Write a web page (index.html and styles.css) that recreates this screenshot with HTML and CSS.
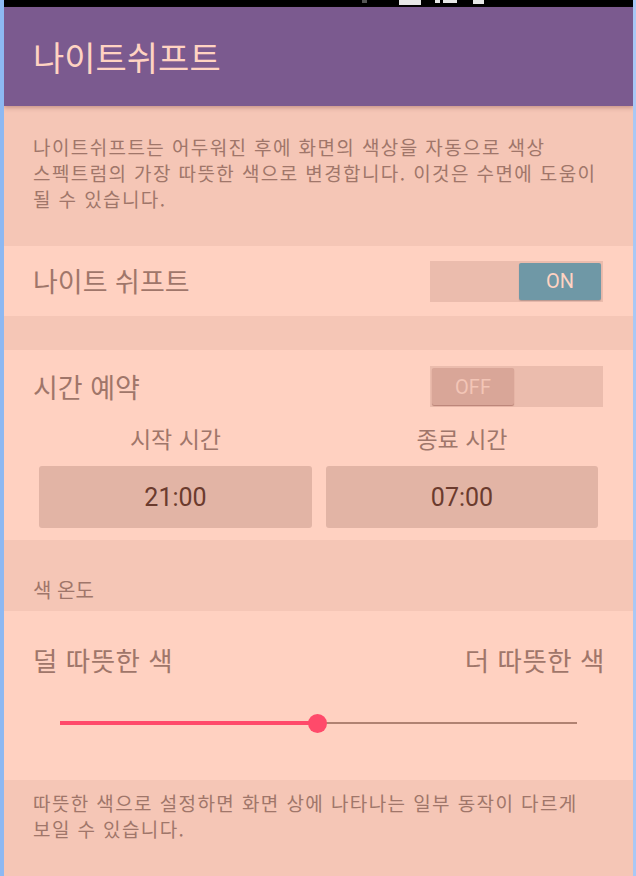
FILE: index.html
```html
<!DOCTYPE html>
<html lang="ko">
<head>
<meta charset="utf-8">
<link rel="stylesheet" href="styles.css">
</head>
<body>
<div class="frame">
  <div class="statusbar">
    <span class="si si1"></span>
    <span class="si si2"></span>
    <span class="si si3"></span>
    <span class="si si4"></span>
    <span class="si si5"></span>
  </div>
  <header class="appbar"><h1 class="title">나이트쉬프트</h1></header>
  <section class="band desc">
    <p class="note">나이트쉬프트는 어두워진 후에 화면의 색상을 자동으로 색상<br>스펙트럼의 가장 따뜻한 색으로 변경합니다. 이것은 수면에 도움이<br>될 수 있습니다.</p>
  </section>
  <section class="panel row-night">
    <span class="label">나이트 쉬프트</span>
    <div class="switch on"><span class="thumb">ON</span></div>
  </section>
  <div class="band gap"></div>
  <section class="panel schedule">
    <div class="row-sched">
      <span class="label">시간 예약</span>
      <div class="switch off"><span class="thumb">OFF</span></div>
    </div>
    <div class="times">
      <div class="tcol">
        <span class="tlabel">시작 시간</span>
        <div class="tbox">21:00</div>
      </div>
      <div class="tcol">
        <span class="tlabel">종료 시간</span>
        <div class="tbox">07:00</div>
      </div>
    </div>
  </section>
  <section class="band temp-head"><span class="small">색 온도</span></section>
  <section class="panel temp">
    <div class="ends"><span class="label lg">덜 따뜻한 색</span><span class="label lg">더 따뜻한 색</span></div>
    <div class="slider">
      <div class="fill" style="width:49.8%"></div>
      <div class="rest"></div>
      <span class="knob" style="left:49.8%"></span>
    </div>
  </section>
  <section class="band foot">
    <p class="note">따뜻한 색으로 설정하면 화면 상에 나타나는 일부 동작이 다르게<br>보일 수 있습니다.</p>
  </section>
</div>
</body>
</html>
```

FILE: styles.css
```css
html, body {
  margin: 0;
  padding: 0;
  background: #ffd1c1;
}
body {
  width: 636px;
  height: 876px;
  overflow: hidden;
  font-family: "Noto Sans CJK KR", "Noto Sans", sans-serif;
}
.frame {
  width: 636px;
  height: 876px;
  box-sizing: border-box;
  border-left: 4px solid #8db8f2;
  border-right: 3px solid #a9c8f5;
  display: flex;
  flex-direction: column;
  overflow: hidden;
}
.statusbar {
  height: 7px;
  background: #000;
  position: relative;
  flex: none;
}
.si {
  position: absolute;
  top: 0;
  height: 3px;
  background: #e8e8e8;
}
.si1 { left: 358px; width: 5px; background: #555; }
.si2 { left: 395px; width: 22px; height: 5px; }
.si3 { left: 431px; width: 5px; }
.si4 { left: 439px; width: 14px; }
.si5 { left: 469px; width: 11px; height: 4px; }
.appbar {
  height: 99px;
  background: #7b5a8f;
  display: flex;
  align-items: center;
  padding-left: 29px;
  flex: none;
  position: relative;
  z-index: 1;
  box-shadow: 0 2px 4px rgba(120, 60, 60, 0.35);
}
.title {
  margin: 0;
  font-weight: 400;
  font-size: 34px;
  line-height: 44px;
  color: #ffd3c2;
  letter-spacing: 0;
}
.band {
  background: #f5c6b6;
  flex: none;
}
.panel {
  background: #ffd1c1;
  flex: none;
}
.desc {
  height: 140px;
  padding: 28px 0 0 29px;
  box-sizing: border-box;
}
.note {
  margin: 0;
  font-size: 19px;
  line-height: 26px;
  color: #a0766a;
  letter-spacing: 1.4px;
}
.label {
  font-size: 27px;
  line-height: 38px;
  color: #a0766a;
}
.row-night {
  height: 70px;
  display: flex;
  align-items: center;
  justify-content: space-between;
  padding: 0 30px 0 29px;
}
.switch {
  width: 173px;
  height: 41px;
  background: #ebbcad;
  box-sizing: border-box;
  padding: 2px;
  display: flex;
}
.switch.on { justify-content: flex-end; }
.thumb {
  width: 82px;
  height: 37px;
  border-radius: 2px;
  display: flex;
  align-items: center;
  justify-content: center;
  font-family: Roboto, "Noto Sans", sans-serif;
  font-size: 20px;
}
.switch.on .thumb {
  background: #6f98a6;
  color: #ffd3c2;
  box-shadow: 0 1px 1px rgba(60, 60, 70, 0.3);
}
.switch.off .thumb {
  background: #d9a698;
  color: #f3c5b6;
  box-shadow: 0 1px 1px rgba(150, 90, 80, 0.6);
}
.gap { height: 34px; }
.schedule {
  height: 190px;
  padding: 16px 30px 0 29px;
  box-sizing: border-box;
}
.row-sched {
  display: flex;
  justify-content: space-between;
  align-items: center;
}
.times {
  display: grid;
  grid-template-columns: 273px 272px;
  column-gap: 14px;
  margin: 17px 0 0 6px;
}
.tcol {
  display: flex;
  flex-direction: column;
  align-items: center;
}
.tlabel {
  font-size: 23px;
  color: #a0766a;
  line-height: 28px;
}
.tbox {
  margin-top: 14px;
  align-self: stretch;
  height: 62px;
  background: #e2b4a5;
  border-radius: 3px;
  display: flex;
  align-items: center;
  justify-content: center;
  font-family: Roboto, "Noto Sans", sans-serif;
  font-size: 25px;
  color: #6b3b2e;
}
.temp-head {
  height: 71px;
  display: flex;
  align-items: flex-end;
  padding: 0 0 7px 29px;
  box-sizing: border-box;
}
.small {
  font-size: 20px;
  line-height: 28px;
  color: #a0766a;
}
.temp {
  height: 169px;
  padding: 31px 28px 0 29px;
  box-sizing: border-box;
}
.ends {
  display: flex;
  justify-content: space-between;
  line-height: 35px;
}
.label.lg { font-size: 26.5px; line-height: 35px; letter-spacing: 0.5px; }
.slider {
  position: relative;
  margin: 36px 28px 0 27px;
  height: 20px;
  display: flex;
  align-items: center;
}
.fill {
  height: 4px;
  background: #ff4a6a;
  flex: none;
}
.rest {
  flex: 1;
  height: 2px;
  background: #b08272;
}
.knob {
  position: absolute;
  top: 50%;
  width: 19px;
  height: 19px;
  margin: -9.5px 0 0 -9.5px;
  border-radius: 50%;
  background: #ff4a6a;
}
.foot {
  flex: 1;
  padding: 10px 0 0 29px;
  box-sizing: border-box;
}
```
